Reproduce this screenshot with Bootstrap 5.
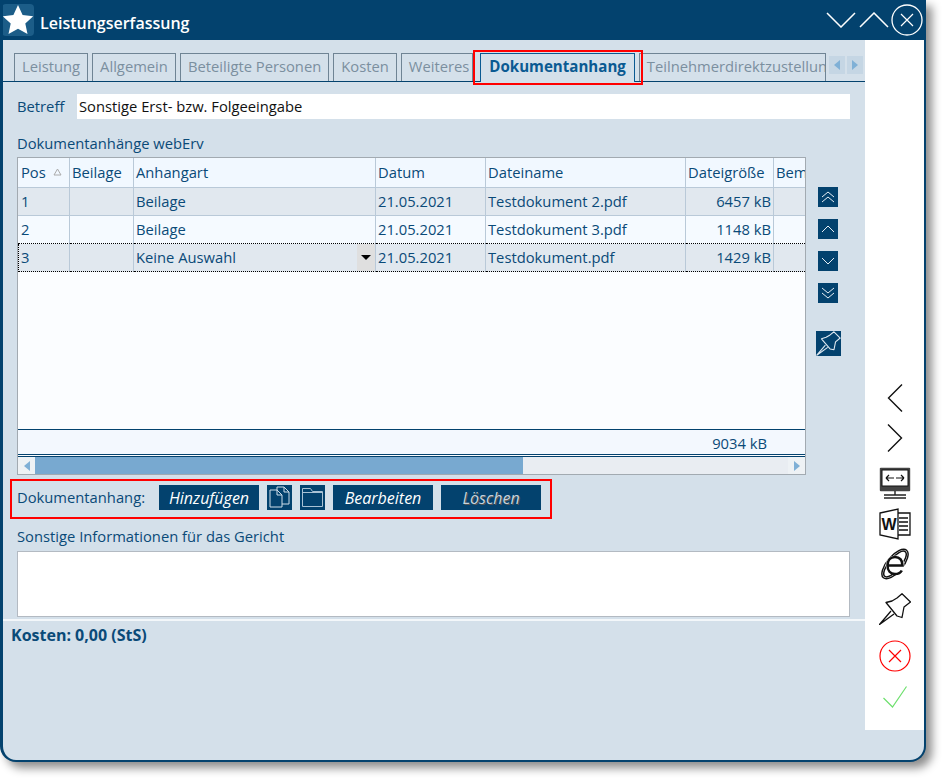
<!DOCTYPE html>
<html lang="de">

<head>
    <meta charset="UTF-8">
    <meta name="viewport" content="width=device-width, initial-scale=1.0">
    <title>Leistungserfassung</title>

    <link href="https://cdn.jsdelivr.net/npm/bootstrap@5.3.0/dist/css/bootstrap.min.css" rel="stylesheet">
    <style>
        html, body { height: 778px; }
        body { background: #fff; margin: 0; font-family: "Open Sans", sans-serif; color: #0a4a78; font-size: 14.75px; overflow: hidden; }
        .app-window { width: 926px; height: 762px; background: #d4e0ea; border: solid #03426e; border-width: 0 2px 2px 3px; border-radius: 0 0 16px 16px; box-shadow: 6px 6px 10px rgba(0,0,0,.45); overflow: hidden; }
        .title-bar { height: 40px; background: #03426e; margin-left: -3px; margin-right: -2px; padding: 0 3px 0 2px; color: #fff; }
        .star-box { width: 32px; height: 32px; background: #1c5d88; border-radius: 4px; margin-right: 6px; }
        .title-text { font-size: 16px; font-weight: 600; padding-top: 6px; }
        .chev-down { margin-right: 3px; }
        .chev-up { margin-right: 2px; }
        .main-area { width: 862px; }
        .side-rail { width: 59px; height: 690px; background: #fff; padding-top: 338px; }
        .rail-arrow { height: 40px; }
        .rail-monitor { height: 50px; }
        .rail-word { height: 32px; }
        .rail-ie { height: 48px; }
        .rail-pin { height: 42px; }
        .rail-cancel { height: 52px; }
        .rail-check { height: 30px; }

        .tab-strip { height: 42px; padding: 13px 0 0 11px; border-bottom: 1px solid #03426e; gap: 4px; flex-wrap: nowrap; }
        .tab-strip .nav-link { height: 28px; padding: 0 7px; border: 1px solid #6f8494; border-bottom: 0; border-radius: 0; color: #7b8f9f; font-size: 14.75px; line-height: 25px; background: transparent; white-space: nowrap; }
        .tab-strip .nav-link.tab-narrow { padding-right: 3px; }
        .tab-active-item { margin-left: 3px; }
        .tab-strip .nav-link.active { position: relative; color: #0a5a92; font-weight: 700; border-color: #0a5a92; background: #d4e0ea; height: 29px; font-size: 15.1px; padding: 0 8px; }
        .tab-strip .tab-cut { width: 187px; overflow: hidden; padding: 0 0 0 7px; }
        .tab-mark { position: absolute; left: -8px; top: -4px; width: 170px; height: 35px; border: 2px solid #f00; }
        .tab-arrow { width: 16px; height: 18px; flex-shrink: 0; background: #c5d6e4; margin: 3px 0 0 -1px; }
        .tab-arrow-next { margin-left: -2px; }

        .field-row { height: 25px; margin: 12px 15px 0 14px; }
        .field-row label { width: 60px; flex-shrink: 0; }
        .subject-input { height: 25px; padding: 0 2px 2px; border: 0; border-radius: 0; color: #111; font-size: 14.75px; background: #fff; }
        .section-label { height: 20px; margin: 14px 14px 4px; line-height: 20px; }

        .grid-box { width: 789px; height: 318px; margin-left: 14px; border: 1px solid #a2aab1; background: #fbfdff; }
        .grid-view { overflow: hidden; }
        .doc-grid { width: 801px; table-layout: fixed; margin: 0; border-collapse: separate; border-spacing: 0; --bs-table-bg: transparent; color: #0a4a78; }
        .doc-grid th, .doc-grid td { padding: 0 2px; height: 28px; line-height: 27px; font-weight: 400; border: 0; border-right: 1px solid #b9c9d8; border-bottom: 1px solid #b9c9d8; color: #0a4a78; font-size: 14.75px; white-space: nowrap; overflow: hidden; box-shadow: none; }
        .doc-grid th { height: 30px; line-height: 29px; background: #f1f8ff; }
        .doc-grid th:first-child, .doc-grid td:first-child { padding-left: 3px; }
        .doc-grid .row-odd td { background: #e1e8ef; }
        .doc-grid .row-even td { background: #f5faff; }
        .doc-grid .row-before td { border-bottom: 1px dotted #000; }
        .doc-grid .row-current td { border-bottom: 1px dotted #000; }
        .doc-grid .row-current td:first-child { border-left: 1px dotted #000; padding-left: 2px; }
        .doc-grid td.combo-wrap { padding: 0 0 0 2px; }
        .sort-mark { float: right; margin: 10px 5px 0 0; }
        .combo-cell { width: 18px; height: 27px; background: #dfdfdf; }
        .combo-arrow { width: 0; height: 0; border: 5px solid transparent; border-top-color: #000; border-bottom: 0; }
        .total-bar { height: 26px; background: #f3f8fe; border-top: 1px solid #03426e; border-bottom: 1px solid #03426e; margin-bottom: 1px; padding-right: 38px; line-height: 27px; }
        .h-scroll { height: 18px; border-top: 1px solid #03426e; background: #e9edf2; }
        .scroll-btn { width: 17px; background: #eef2f5; }
        .scroll-thumb { width: 488px; background: #78a9d0; }

        .move-col { width: 44px; padding-top: 30px; padding-left: 12px; gap: 12px; }
        .square-btn { width: 20px; height: 20px; background: #03426e; border: 0; padding: 0; border-radius: 0; }
        .pin-btn { width: 25px; height: 25px; margin: 16px 0 0 -2px; }

        .action-box { width: 542px; height: 40px; margin: 4px 0 0 7px; border: 2px solid #f00; padding: 4px 0 0 5px; }
        .action-box > span { width: 142px; padding-top: 1px; }
        .act-btn { width: 100px; height: 25px; padding: 1px 0 0; margin-right: 8px; background: #03426e; color: #fff; border: 0; border-radius: 0; font-style: italic; font-size: 16px; line-height: 24px; }
        .act-btn:hover { background: #03426e; color: #fff; }
        .act-icon { width: 25px; height: 25px; padding: 0; margin-right: 8px; background: #03426e; border: 0; border-radius: 0; }
        .muted-label { color: #c7d3de; text-shadow: 1px 1px 0 #555; }

        .section-label.note-label { margin-top: 7px; margin-bottom: 5px; }
        .note-area { height: 66px; width: 833px; margin: 0 14px; background: #fff; border: 1px solid #b3bac2; border-radius: 0; resize: none; }
        .cost-row { border-top: 2px solid #f3f7fa; margin-top: 2px; padding: 2px 8px; font-size: 16px; font-weight: 700; color: #0a4a78; }
    </style>
</head>

<body>
    <div class="app-window d-flex flex-column">
        <!-- Title bar -->
        <div class="title-bar d-flex align-items-center">
            <div class="star-box d-flex align-items-center justify-content-center">
                <svg width="32" height="32" viewBox="0 0 32 32"><path d="M16 1l4.600 10 10.600 1.200-7.900 7.200 2.200 10.700L16 24.700 6.500 30.100l2.200-10.700L.8 12.200 11.400 11z" fill="#fff"/></svg>
            </div>
            <div class="title-text flex-grow-1">Leistungserfassung</div>
            <svg width="30" height="16" viewBox="0 0 30 16" class="chev-down"><path d="M1 1l14 14L29 1" fill="none" stroke="#fff" stroke-width="1.500"/></svg>
            <svg width="30" height="16" viewBox="0 0 30 16" class="chev-up"><path d="M1 15L15 1l14 14" fill="none" stroke="#fff" stroke-width="1.500"/></svg>
            <svg width="32" height="32" viewBox="0 0 32 32"><circle cx="16" cy="16" r="15" fill="none" stroke="#fff" stroke-width="1.300"/><path d="M10 10l12 12M22 10L10 22" stroke="#fff" stroke-width="1.200"/></svg>
        </div>

        <div class="d-flex flex-grow-1">
            <div class="main-area">
                <!-- Tabs -->
                <ul class="nav tab-strip">
                    <li class="nav-item"><a class="nav-link" href="#">Leistung</a></li>
                    <li class="nav-item"><a class="nav-link" href="#">Allgemein</a></li>
                    <li class="nav-item"><a class="nav-link" href="#">Beteiligte Personen</a></li>
                    <li class="nav-item"><a class="nav-link" href="#">Kosten</a></li>
                    <li class="nav-item"><a class="nav-link tab-narrow" href="#">Weiteres</a></li>
                    <li class="nav-item tab-active-item"><a class="nav-link active" href="#">Dokumentanhang<span class="tab-mark"></span></a></li>
                    <li class="nav-item"><a class="nav-link tab-cut" href="#">Teilnehmerdirektzustellung</a></li>
                    <li class="tab-arrow d-flex align-items-center justify-content-center"><svg width="6" height="10"><path d="M6 0v10L0 5z" fill="#7fb0d6"/></svg></li>
                    <li class="tab-arrow tab-arrow-next d-flex align-items-center justify-content-center"><svg width="6" height="10"><path d="M0 0v10l6-5z" fill="#7fb0d6"/></svg></li>
                </ul>

                <div class="field-row d-flex align-items-center">
                    <label>Betreff</label>
                    <input class="form-control subject-input" value="Sonstige Erst- bzw. Folgeeingabe">
                </div>

                <div class="section-label">Dokumentanhänge webErv</div>

                <div class="d-flex">
                    <div class="grid-box d-flex flex-column">
                        <div class="grid-view flex-grow-1">
                            <table class="table doc-grid">
                                <colgroup>
                                    <col style="width:52px"><col style="width:64px"><col style="width:242px"><col style="width:110px"><col style="width:200px"><col style="width:88px"><col style="width:45px">
                                </colgroup>
                                <thead>
                                    <tr><th>Pos<svg class="sort-mark" width="9" height="8"><path d="M4.500 1L8 7H1z" fill="none" stroke="#aaa"/></svg></th><th>Beilage</th><th>Anhangart</th><th>Datum</th><th>Dateiname</th><th>Dateigröße</th><th>Bemerkung</th></tr>
                                </thead>
                                <tbody>
                                    <tr class="row-odd"><td>1</td><td></td><td>Beilage</td><td>21.05.2021</td><td>Testdokument 2.pdf</td><td class="text-end">6457 kB</td><td></td></tr>
                                    <tr class="row-even row-before"><td>2</td><td></td><td>Beilage</td><td>21.05.2021</td><td>Testdokument 3.pdf</td><td class="text-end">1148 kB</td><td></td></tr>
                                    <tr class="row-odd row-current"><td>3</td><td></td><td class="combo-wrap"><div class="d-flex justify-content-between align-items-center">Keine Auswahl<span class="combo-cell d-flex align-items-center justify-content-center"><span class="combo-arrow"></span></span></div></td><td>21.05.2021</td><td>Testdokument.pdf</td><td class="text-end">1429 kB</td><td></td></tr>
                                </tbody>
                            </table>
                        </div>
                        <div class="total-bar text-end">9034 kB</div>
                        <div class="h-scroll d-flex">
                            <div class="scroll-btn d-flex align-items-center justify-content-center"><svg width="6" height="10"><path d="M6 0v10L0 5z" fill="#7fb0d6"/></svg></div>
                            <div class="scroll-thumb"></div>
                            <div class="flex-grow-1"></div>
                            <div class="scroll-btn d-flex align-items-center justify-content-center"><svg width="6" height="10"><path d="M0 0v10l6-5z" fill="#7fb0d6"/></svg></div>
                        </div>
                    </div>

                    <div class="move-col d-flex flex-column">
                        <button class="btn square-btn d-flex align-items-center justify-content-center"><svg width="14" height="14"><path d="M1 7l6-5 6 5M1 12l6-5 6 5" fill="none" stroke="#e6eef4"/></svg></button>
                        <button class="btn square-btn d-flex align-items-center justify-content-center"><svg width="14" height="14"><path d="M1 10l6-6 6 6" fill="none" stroke="#e6eef4"/></svg></button>
                        <button class="btn square-btn d-flex align-items-center justify-content-center"><svg width="14" height="14"><path d="M1 4l6 6 6-6" fill="none" stroke="#e6eef4"/></svg></button>
                        <button class="btn square-btn d-flex align-items-center justify-content-center"><svg width="14" height="14"><path d="M1 2l6 5 6-5M1 7l6 5 6-5" fill="none" stroke="#e6eef4"/></svg></button>
                        <button class="btn square-btn pin-btn d-flex align-items-center justify-content-center"><svg width="25" height="25" viewBox="0 0 32 32"><path d="M23 1l8 8-6 5-2 10-5-1L7 10l6-2 5-3zM12 18L1 31l14-10" fill="none" stroke="#dfe9f1" stroke-width="1.400" stroke-linejoin="round"/></svg></button>
                    </div>
                </div>

                <!-- Action row -->
                <div class="action-box d-flex align-items-start">
                    <span class="lh-base">Dokumentanhang:</span>
                    <button class="btn act-btn">Hinzufügen</button>
                    <button class="btn act-icon d-flex"><svg width="25" height="25" viewBox="0 0 25 25"><path d="M10 5V2h7l5 5v12h-7M17 2v5h5M3 5h7l5 5v12H3zM10 5v5h5" fill="none" stroke="#cfdde8"/></svg></button>
                    <button class="btn act-icon d-flex"><svg width="25" height="25" viewBox="0 0 25 25"><path d="M2.500 3.500h8l2 3h10v15h-20zM2.500 7.500h20" fill="none" stroke="#a9c2d5"/></svg></button>
                    <button class="btn act-btn">Bearbeiten</button>
                    <button class="btn act-btn"><span class="muted-label">Löschen</span></button>
                </div>

                <div class="section-label note-label">Sonstige Informationen für das Gericht</div>
                <textarea class="form-control note-area d-block"></textarea>
                <div class="cost-row">Kosten: 0,00 (StS)</div>
            </div>

            <!-- Right rail -->
            <div class="side-rail d-flex flex-column align-items-center">
                <div class="rail-arrow d-flex align-items-center"><svg width="16" height="28" viewBox="0 0 16 28"><path d="M15 .5L1.500 14 15 27.500" fill="none" stroke="#111" stroke-width="1.400"/></svg></div>
                <div class="rail-arrow d-flex align-items-center"><svg width="16" height="28" viewBox="0 0 16 28"><path d="M1 .5L14.500 14 1 27.500" fill="none" stroke="#111" stroke-width="1.400"/></svg></div>
                <div class="rail-monitor d-flex align-items-center"><svg width="32" height="32" viewBox="0 0 32 32"><rect x=".8" y=".8" width="30.400" height="23.400" rx="1" fill="#444"/><rect x="3" y="3" width="26" height="16" fill="#fff" stroke="#111"/><path d="M7 11h8M7 11l3-3M7 11l3 3M17 11h8M25 11l-3-3M25 11l-3 3" fill="none" stroke="#111" stroke-width="1.200"/><path d="M16 24v4M5 28h22M5 31h22" fill="none" stroke="#222" stroke-width="1.400"/></svg></div>
                <div class="rail-word d-flex align-items-center"><svg width="32" height="32" viewBox="0 0 32 32"><path d="M19 5h12v22H19M20 10h9M20 14h9M20 18h9M20 22h9" fill="none" stroke="#111" stroke-width="1.300"/><path d="M1 5l18-4v30L1 27z" fill="#fff" stroke="#111" stroke-width="1.300"/><text x="2.500" y="21.500" font-family="Liberation Sans" font-weight="700" font-size="16" fill="#111">W</text></svg></div>
                <div class="rail-ie d-flex align-items-center"><svg width="30" height="32" viewBox="0 0 30 32"><ellipse cx="15" cy="16" rx="18" ry="8" transform="rotate(-50 15 16)" fill="none" stroke="#111" stroke-width="1.500"/><ellipse cx="15" cy="16" rx="16" ry="6" transform="rotate(-50 15 16)" fill="none" stroke="#111" stroke-width="1.500"/><circle cx="15" cy="17" r="9.500" fill="#fff"/><path d="M7.500 17.500h15c0-5.500-3-8.500-7.500-8.500s-7.500 3.500-7.500 8.500 3 8.500 7.500 8.500c3 0 5.500-1 6.800-3.500" fill="none" stroke="#111" stroke-width="2.600"/></svg></div>
                <div class="rail-pin d-flex align-items-center"><svg width="32" height="32" viewBox="0 0 32 32"><path d="M23 .8L31.500 9l-6.500 5-2 10.500-5-1.500L7 9.500l6-1.500 5-3zM12 18L.5 31.500 15 21" fill="none" stroke="#111" stroke-width="1.300" stroke-linejoin="round"/></svg></div>
                <div class="rail-cancel d-flex align-items-center"><svg width="32" height="32" viewBox="0 0 32 32"><circle cx="16" cy="16" r="15" fill="none" stroke="#f00" stroke-width="1.200"/><path d="M10 10l12 12M22 10L10 22" stroke="#f00" stroke-width="1.200"/></svg></div>
                <div class="rail-check d-flex align-items-center"><svg width="24" height="22" viewBox="0 0 24 22"><path d="M.5 12l9 9L23.500 .5" fill="none" stroke="#6ee06e" stroke-width="1.200"/></svg></div>
            </div>
        </div>
    </div>

    <script src="https://cdn.jsdelivr.net/npm/bootstrap@5.3.0/dist/js/bootstrap.bundle.min.js"></script>
</body>

</html>
